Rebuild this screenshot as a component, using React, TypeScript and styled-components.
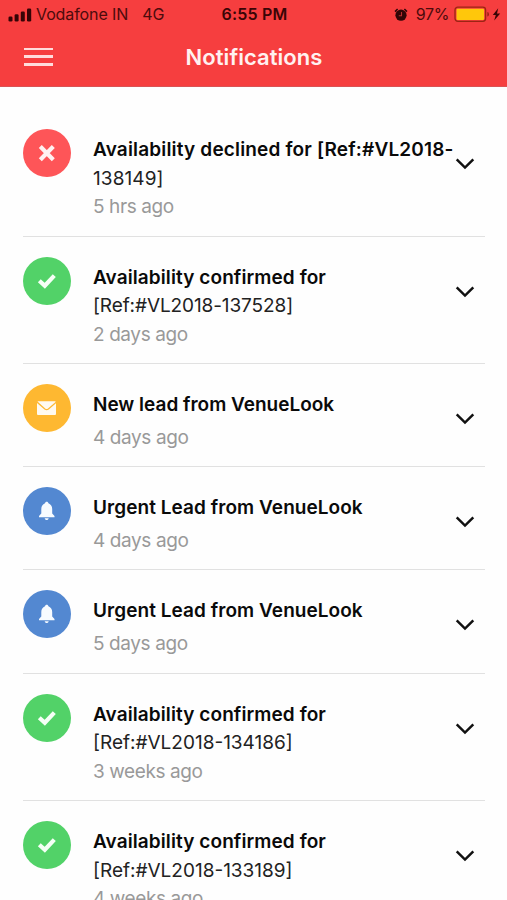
import React from 'react';
import styled, { createGlobalStyle } from 'styled-components';

const GlobalStyle = createGlobalStyle`
  html, body { margin: 0; padding: 0; background: #fefefe; }
  body { height: 900px; overflow: hidden; }
  * { box-sizing: border-box; }
`;

const Screen = styled.div`
  width: 507px;
  height: 900px;
  overflow: hidden;
  background: #fefefe;
  font-family: Inter, "Liberation Sans", sans-serif;
`;

const Header = styled.header`
  height: 87px;
  background: #f63e3f;
  border-bottom: 1px solid #d95355;
`;

const StatusBar = styled.div`
  height: 28px;
  display: grid;
  grid-template-columns: 1fr auto 1fr;
  align-items: center;
  padding: 1px 6px 0 8px;
  color: #4c0b0c;
  font-size: 16px;
  line-height: 27px;
  white-space: nowrap;
`;

const Carrier = styled.div`
  display: flex;
  align-items: center;
`;

const CarrierName = styled.span`
  margin: 0 14px 0 4px;
  letter-spacing: -0.1px;
`;

const Network = styled.span`
  letter-spacing: -0.1px;
`;

const Clock = styled.div`
  color: #3a0506;
  font-weight: 600;
  letter-spacing: 0.2px;
`;

const Power = styled.div`
  display: flex;
  align-items: center;
  justify-content: flex-end;
`;

const Percent = styled.span`
  margin: 0 5px 0 8px;
  letter-spacing: -0.35px;
`;

const NavBar = styled.div`
  height: 57px;
  display: grid;
  grid-template-columns: 46px 1fr 46px;
  align-items: center;
  padding: 0 23px 0 24px;
`;

const MenuButton = styled.button`
  width: 29px;
  height: 18px;
  padding: 0;
  border: 0;
  background: none;
  display: flex;
  flex-direction: column;
  justify-content: space-between;
`;

const MenuLine = styled.span`
  width: 29px;
  height: 2.5px;
  background: #ffdcdc;
`;

const Title = styled.h1`
  margin: 0;
  text-align: center;
  color: #fff1f0;
  font-size: 22px;
  line-height: 28px;
  font-weight: 600;
  letter-spacing: 0.05px;
`;

const List = styled.ul`
  list-style: none;
  margin: 0;
  padding: 22px 22px 0 23px;
`;

const Row = styled.li<{ $compact: boolean }>`
  height: ${p => (p.$compact ? 103.2 : 127.5)}px;
  display: grid;
  grid-template-columns: 70px 1fr 30px;
  align-items: start;
  border-bottom: 1.5px solid #e1e1e1;
`;

const Badge = styled.span<{ $color: string }>`
  width: 48px;
  height: 48px;
  margin-top: 20px;
  border-radius: 50%;
  background: ${p => p.$color};
  display: flex;
  align-items: center;
  justify-content: center;
`;

const Copy = styled.div`
  padding-top: 27.1px;
  font-size: 19px;
  line-height: 28.5px;
  white-space: nowrap;
`;

const Heading = styled.div<{ $spacing: number }>`
  color: #0a0a0a;
  font-weight: 600;
  letter-spacing: ${p => p.$spacing}px;
`;

const Reference = styled.div<{ $spacing: number }>`
  color: #222;
  letter-spacing: ${p => p.$spacing}px;
`;

const Time = styled.div<{ $gap: boolean }>`
  margin-top: ${p => (p.$gap ? 4 : 0)}px;
  color: #999;
  letter-spacing: -0.4px;
`;

const Expand = styled.button`
  width: 20px;
  height: 14px;
  margin: 48px 0 0 0;
  padding: 0;
  border: 0;
  background: none;
  display: flex;
`;

type Kind = 'declined' | 'confirmed' | 'lead' | 'urgent';

const colors: Record<Kind, string> = {
  declined: '#fe5558',
  confirmed: '#52d268',
  lead: '#feb831',
  urgent: '#5388d1',
};

function KindIcon({ kind }: { kind: Kind }) {
  if (kind === 'declined')
    return (
      <svg width="48" height="48" viewBox="0 0 48 48" fill="none" stroke="#fff1f1" strokeWidth="4.2">
        <path d="M17.3 17.5 30.3 30.7M30.3 17.5 17.3 30.7" />
      </svg>
    );
  if (kind === 'confirmed')
    return (
      <svg width="48" height="48" viewBox="0 0 48 48" fill="none" stroke="#f5fff6" strokeWidth="4.2">
        <path d="M16.3 23.7 21.8 28.8 31.3 18.6" />
      </svg>
    );
  if (kind === 'lead')
    return (
      <svg width="48" height="48" viewBox="0 0 48 48" fill="#fffaf0">
        <path d="M15.2 17.3H32a1 1 0 0 1 .8.4L25 24.4q-1.4 1.1-2.8 0L14.5 17.6Z" />
        <path d="M14 19.1 21.5 25.5q2.2 1.5 4.3 0L33 19.2V30q0 1-1 1H15q-1 0-1-1Z" />
      </svg>
    );
  return (
    <svg width="48" height="48" viewBox="0 0 48 48" fill="#f7fbff">
      <path d="M23.7 14.8c1 0 1.6.6 1.7 1.5 2.4.9 3.8 3 3.8 5.6v4.7l2.3 2.4v1.2H16v-1.2l2.3-2.4v-4.7c0-2.6 1.4-4.7 3.7-5.6.1-.9.8-1.5 1.7-1.5Z" />
      <path d="M21.7 31.2h4c-.2 1.2-1 1.8-2 1.8s-1.8-.6-2-1.8Z" />
    </svg>
  );
}

interface Item {
  kind: Kind;
  title: string;
  reference?: string;
  time: string;
  spacing?: number;
  referenceSpacing?: number;
}

const items: Item[] = [
  { kind: 'declined', title: 'Availability declined for [Ref:#VL2018-', reference: '138149]', time: '5 hrs ago', spacing: 0.17, referenceSpacing: 0.1 },
  { kind: 'confirmed', title: 'Availability confirmed for', reference: '[Ref:#VL2018-137528]', time: '2 days ago', spacing: 0.09, referenceSpacing: -0.1 },
  { kind: 'lead', title: 'New lead from VenueLook', time: '4 days ago' },
  { kind: 'urgent', title: 'Urgent Lead from VenueLook', time: '4 days ago', spacing: 0.06 },
  { kind: 'urgent', title: 'Urgent Lead from VenueLook', time: '5 days ago', spacing: 0.06 },
  { kind: 'confirmed', title: 'Availability confirmed for', reference: '[Ref:#VL2018-134186]', time: '3 weeks ago', spacing: 0.09 },
  { kind: 'confirmed', title: 'Availability confirmed for', reference: '[Ref:#VL2018-133189]', time: '4 weeks ago', spacing: 0.09 },
];

export default function App() {
  return (
    <Screen>
      <GlobalStyle />
      <Header>
        <StatusBar>
          <Carrier>
            <svg width="24" height="14" viewBox="0 0 24 14" fill="#350406">
              <rect x="0.5" y="8.5" width="4" height="5" rx="1.3" />
              <rect x="6.6" y="6.2" width="4" height="7.3" rx="1.3" />
              <rect x="12.8" y="3.4" width="4" height="10.1" rx="1.3" />
              <rect x="19" y="0.5" width="4.2" height="13" rx="1.3" />
            </svg>
            <CarrierName>Vodafone IN</CarrierName>
            <Network>4G</Network>
          </Carrier>
          <Clock>6:55 PM</Clock>
          <Power>
            <svg width="14" height="14" viewBox="0 0 14 14" fill="none">
              <circle cx="7" cy="7.2" r="5.6" fill="#300607" />
              <path d="M1 3.6 3.6 1M13 3.6 10.4 1" stroke="#300607" strokeWidth="1.5" />
              <path d="M7.5 4v3.8H4.8" stroke="#b92e30" strokeWidth="1.1" />
            </svg>
            <Percent>97%</Percent>
            <svg width="47" height="17" viewBox="0 0 47 17">
              <rect x="1" y="1.2" width="30.6" height="14.2" rx="2.8" fill="#f63e3f" stroke="#9b2513" strokeWidth="1.3" />
              <rect x="2.5" y="2.7" width="27.6" height="11.2" rx="1.2" fill="#ffc70b" />
              <path d="M33.3 6q1.7 0 1.7 2.3t-1.7 2.3Z" fill="#9b2513" />
              <path d="M44.2 2.2 38.8 9h3l-1.6 5.6 6-7.2h-3.2Z" fill="#3a0506" />
            </svg>
          </Power>
        </StatusBar>
        <NavBar>
          <MenuButton aria-label="Menu">
            <MenuLine />
            <MenuLine />
            <MenuLine />
          </MenuButton>
          <Title>Notifications</Title>
        </NavBar>
      </Header>
      <List>
        {items.map((item, i) => (
          <Row key={i} $compact={!item.reference}>
            <Badge $color={colors[item.kind]}>
              <KindIcon kind={item.kind} />
            </Badge>
            <Copy>
              <Heading $spacing={item.spacing ?? 0}>{item.title}</Heading>
              {item.reference && <Reference $spacing={item.referenceSpacing ?? 0}>{item.reference}</Reference>}
              <Time $gap={!item.reference}>{item.time}</Time>
            </Copy>
            <Expand aria-label="Expand">
              <svg width="20" height="14" viewBox="0 0 20 14" fill="none" stroke="#111" strokeWidth="2.5">
                <path d="M1.7 2.4 10 10.6 18.3 2.4" />
              </svg>
            </Expand>
          </Row>
        ))}
      </List>
    </Screen>
  );
}
